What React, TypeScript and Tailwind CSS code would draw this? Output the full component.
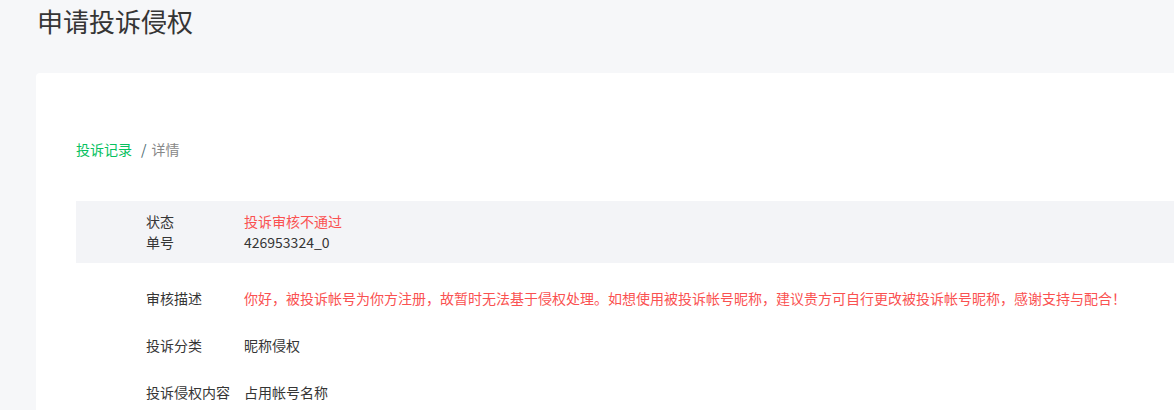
const rows = [
  {
    label: "审核描述",
    value:
      "你好，被投诉帐号为你方注册，故暂时无法基于侵权处理。如想使用被投诉帐号昵称，建议贵方可自行更改被投诉帐号昵称，感谢支持与配合！",
    red: true,
  },
  { label: "投诉分类", value: "昵称侵权", red: false },
  { label: "投诉侵权内容", value: "占用帐号名称", red: false },
];

const App = () => {
  return (
    <div
      className="min-h-[410px] overflow-hidden bg-[#f6f7f9] text-[#353535]"
      style={{ fontFamily: '"Noto Sans CJK SC", "Noto Sans", sans-serif' }}
    >
      <h1 className="pl-[37px] pt-[3px] text-[26px] font-normal leading-[36px] text-[#353535]">
        申请投诉侵权
      </h1>
      <section className="ml-[36px] mt-[34px] min-h-[340px] rounded-tl-[4px] bg-white pl-[40px]">
        <nav className="flex items-center pt-[66px] text-[14px] leading-[20px]">
          <span className="text-[#07c160]">投诉记录</span>
          <span className="ml-[9px] mr-[5px] text-[#4a6a70]">/</span>
          <span className="text-[#888]">详情</span>
        </nav>
        <div className="mt-[42px] bg-[#f3f4f7] py-[10px] pl-[70px] text-[14px] leading-[21px]">
          <div className="flex">
            <span className="w-[98px] shrink-0">状态</span>
            <span className="text-[#fa5151]">投诉审核不通过</span>
          </div>
          <div className="flex">
            <span className="w-[98px] shrink-0">单号</span>
            <span>426953324_0</span>
          </div>
        </div>
        <div className="mt-[12px] pl-[70px] text-[14px] leading-[21px]">
          {rows.map((row, i) => (
            <div key={i} className="flex py-[13px]">
              <span className="w-[98px] shrink-0">{row.label}</span>
              <span className={row.red ? "whitespace-nowrap text-[#fa5151]" : ""}>
                {row.value}
              </span>
            </div>
          ))}
        </div>
      </section>
    </div>
  );
};

export default App;
